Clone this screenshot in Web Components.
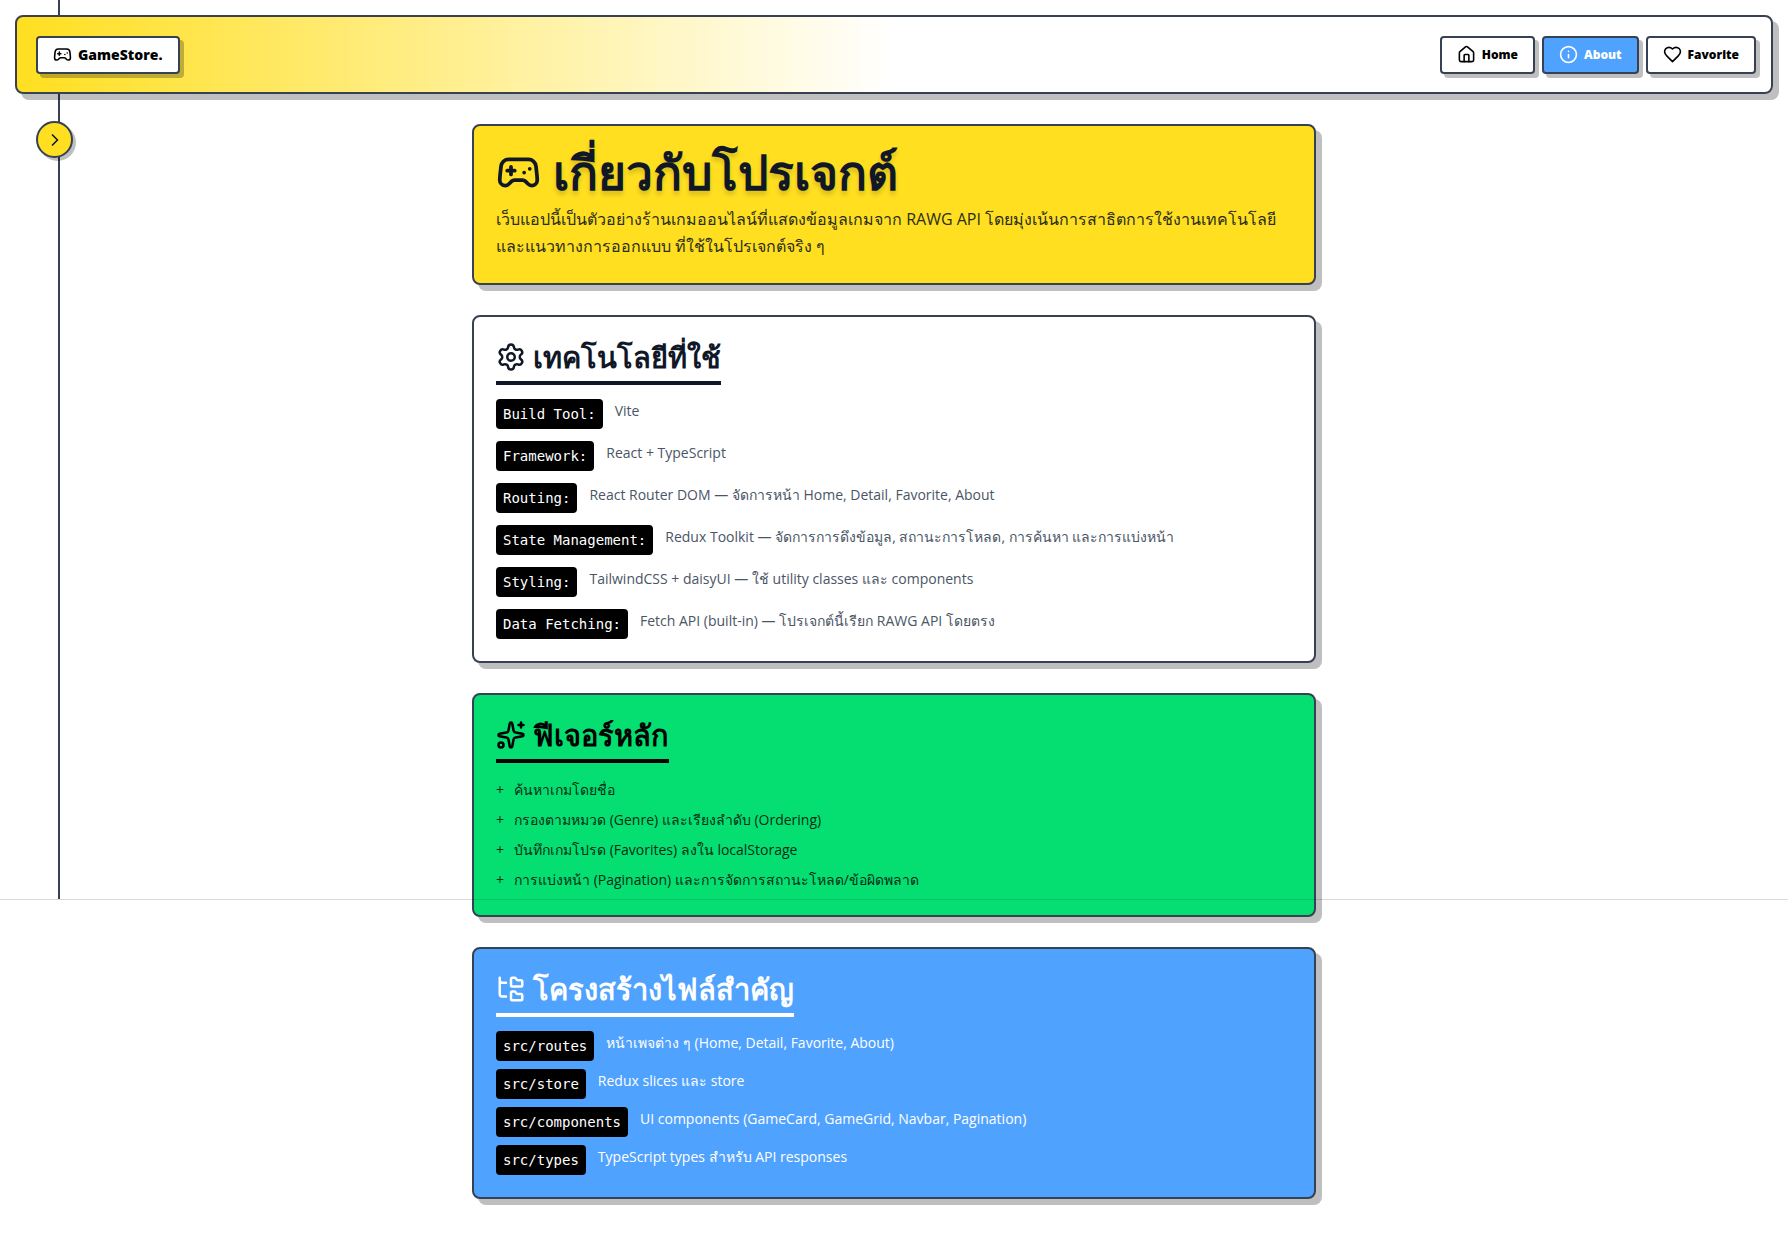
<!DOCTYPE html>
<html lang="th">
<head>
<meta charset="utf-8">
<meta name="viewport" content="width=device-width, initial-scale=1">
<title>GameStore.</title>
<style>
body { margin: 0; background: #fff; font-family: "Open Sans", "Noto Sans", sans-serif; font-size: 14px; }
</style>
</head>
<body>
<game-app></game-app>
<script>
const ICONS = {
  gamepad: '<path d="M6 11h4M8 9v4M15 12h.01M18 10h.01"/><path d="M17.32 5H6.68a4 4 0 0 0-3.978 3.59c-.006.052-.01.101-.017.152C2.604 9.416 2 14.456 2 16a3 3 0 0 0 3 3c1 0 1.5-.5 2-1l1.414-1.414A2 2 0 0 1 9.828 16h4.344a2 2 0 0 1 1.414.586L17 18c.5.5 1 1 2 1a3 3 0 0 0 3-3c0-1.545-.604-6.584-.685-7.258-.007-.05-.011-.1-.017-.151A4 4 0 0 0 17.32 5z"/>',
  home: '<path d="M15 21v-8a1 1 0 0 0-1-1h-4a1 1 0 0 0-1 1v8"/><path d="M3 10a2 2 0 0 1 .709-1.528l7-5.999a2 2 0 0 1 2.582 0l7 5.999A2 2 0 0 1 21 10v9a2 2 0 0 1-2 2H5a2 2 0 0 1-2-2z"/>',
  info: '<circle cx="12" cy="12" r="10"/><path d="M12 16v-4M12 8h.01"/>',
  heart: '<path d="M19 14c1.49-1.46 3-3.21 3-5.5A5.5 5.5 0 0 0 16.5 3c-1.76 0-3 .5-4.5 2-1.5-1.5-2.74-2-4.5-2A5.5 5.5 0 0 0 2 8.5c0 2.3 1.5 4.05 3 5.5l7 7Z"/>',
  chevron: '<path d="m9 18 6-6-6-6"/>',
  settings: '<path d="M9.671 4.136a2.34 2.34 0 0 1 4.659 0 2.34 2.34 0 0 0 3.319 1.915 2.34 2.34 0 0 1 2.33 4.033 2.34 2.34 0 0 0 0 3.831 2.34 2.34 0 0 1-2.33 4.033 2.34 2.34 0 0 0-3.319 1.915 2.34 2.34 0 0 1-4.659 0 2.34 2.34 0 0 0-3.32-1.915 2.34 2.34 0 0 1-2.33-4.033 2.34 2.34 0 0 0 0-3.831A2.34 2.34 0 0 1 6.35 6.051a2.34 2.34 0 0 0 3.319-1.915"/><circle cx="12" cy="12" r="3"/>',
  sparkles: '<path d="M11.017 2.814a1 1 0 0 1 1.966 0l1.051 5.558a2 2 0 0 0 1.594 1.594l5.558 1.051a1 1 0 0 1 0 1.966l-5.558 1.051a2 2 0 0 0-1.594 1.594l-1.051 5.558a1 1 0 0 1-1.966 0l-1.051-5.558a2 2 0 0 0-1.594-1.594l-5.558-1.051a1 1 0 0 1 0-1.966l5.558-1.051a2 2 0 0 0 1.594-1.594z"/><path d="M20 2v4M22 4h-4"/><circle cx="4" cy="20" r="2"/>',
  tree: '<path d="M20 10a1 1 0 0 0 1-1V6a1 1 0 0 0-1-1h-2.500a1 1 0 0 1-.8-.4l-.9-1.200A1 1 0 0 0 15 3h-2a1 1 0 0 0-1 1v5a1 1 0 0 0 1 1Z"/><path d="M20 21a1 1 0 0 0 1-1v-3a1 1 0 0 0-1-1h-2.900a1 1 0 0 1-.88-.55l-.42-.85a1 1 0 0 0-.92-.6H13a1 1 0 0 0-1 1v5a1 1 0 0 0 1 1Z"/><path d="M3 5a2 2 0 0 0 2 2h3M3 3v13a2 2 0 0 0 2 2h3"/>'
};

class Base extends HTMLElement {
  connectedCallback() {
    if (this.shadowRoot) return;
    this.attachShadow({ mode: 'open' }).innerHTML = this.render();
  }
}

customElements.define('g-icon', class extends Base {
  render() {
    return `<style>
      :host { display: block; flex: none; width: 1em; height: 1em; }
      svg { display: block; width: 100%; height: 100%; }
    </style>
    <svg viewBox="0 0 24 24" fill="none" stroke="currentColor" stroke-width="2" stroke-linecap="round" stroke-linejoin="round" aria-hidden="true">${ICONS[this.getAttribute('name')]}</svg>`;
  }
});

customElements.define('nav-button', class extends Base {
  render() {
    return `<style>
      :host { display: block; }
      a { box-sizing: border-box; height: 38px; padding: 0 15px; display: flex; align-items: center; gap: 6px;
        border: 2px solid #364153; border-radius: 4px; background: #fff; color: #000; text-decoration: none;
        box-shadow: 4px 4px 0 rgba(0,0,0,.25); font-size: 12px; font-weight: 800; line-height: 20px; }
      g-icon { font-size: 19px; }
      :host([brand]) a { padding: 0 16px 0 15px; font-size: 14px; }
      :host([active]) a { background: #50a2ff; color: #fff; }
    </style>
    <a href="#${this.getAttribute('icon')}"><g-icon name="${this.getAttribute('icon')}"></g-icon><slot></slot></a>`;
  }
});

customElements.define('site-header', class extends Base {
  render() {
    return `<style>
      :host { display: block; position: relative; z-index: 2; }
      header { box-sizing: border-box; height: 79px; padding: 0 15px 0 19px; display: flex; align-items: center; justify-content: space-between;
        border: 2px solid #364153; border-radius: 8px; background: linear-gradient(to right, #ffdf20, #fff 50%);
        box-shadow: 6px 6px 0 rgba(0,0,0,.25); }
      nav { display: flex; gap: 7px; }
    </style>
    <header>
      <nav-button brand icon="gamepad">GameStore.</nav-button>
      <nav>
        <nav-button icon="home">Home</nav-button>
        <nav-button icon="info" active>About</nav-button>
        <nav-button icon="heart">Favorite</nav-button>
      </nav>
    </header>`;
  }
});

customElements.define('side-drawer', class extends Base {
  render() {
    return `<style>
      :host { display: block; position: absolute; inset: 0 0 auto 0; height: 899px; z-index: 1; pointer-events: none; border-bottom: 1px solid rgba(16,24,40,.16); }
      .rail { box-sizing: border-box; width: 60px; height: 100%; border-right: 2px solid #364153; }
      button { position: absolute; left: 36px; top: 121px; box-sizing: border-box; width: 37px; height: 37px; padding: 0;
        display: grid; place-items: center; border: 2px solid #364153; border-radius: 50%; background: #ffdf20; color: #101828;
        box-shadow: 3px 3px 0 rgba(0,0,0,.25); pointer-events: auto; }
      g-icon { font-size: 20px; }
    </style>
    <div class="rail"></div>
    <button type="button" aria-label="เปิดเมนู"><g-icon name="chevron"></g-icon></button>`;
  }
});

customElements.define('info-card', class extends Base {
  render() {
    return `<style>
      :host { display: block; box-sizing: border-box; padding: 22px; border: 2px solid #364153; border-radius: 8px;
        background: #fff; color: #4a5565; box-shadow: 6px 6px 0 rgba(0,0,0,.25); --head: #101828; }
      :host([tone="green"]) { background: #05df72; color: #032e15; --head: #000; }
      :host([tone="blue"]) { background: #50a2ff; color: #fff; --head: #fff; }
      h2 { box-sizing: border-box; width: fit-content; height: 46px; margin: 0 0 14px; padding-bottom: 6px; display: flex; align-items: center; gap: 7px;
        border-bottom: 4px solid var(--head); color: var(--head); font-size: 29px; font-weight: 700; line-height: 36px; white-space: nowrap; }
      g-icon { font-size: 30px; }
    </style>
    <h2><g-icon name="${this.getAttribute('icon')}"></g-icon><span>${this.getAttribute('heading')}</span></h2>
    <slot></slot>`;
  }
});

customElements.define('hero-card', class extends Base {
  render() {
    return `<style>
      :host { display: block; box-sizing: border-box; padding: 22px; border: 2px solid #364153; border-radius: 8px;
        background: #ffdf20; color: #2a2d1c; box-shadow: 6px 6px 0 rgba(0,0,0,.25); }
      h1 { margin: 0 0 10px; height: 48px; display: flex; align-items: center; gap: 12px; color: #101828; font-size: 48px; font-weight: 700; line-height: 48px;
        white-space: nowrap; text-shadow: 0 4px 4px rgba(0,0,0,.15); }
      g-icon { font-size: 45px; }
      p { margin: 0 0 1px; font-size: 16px; line-height: 27px; }
    </style>
    <h1><g-icon name="gamepad"></g-icon><span>เกี่ยวกับโปรเจกต์</span></h1>
    <p><slot></slot></p>`;
  }
});

customElements.define('spec-row', class extends Base {
  render() {
    return `<style>
      :host { display: flex; align-items: flex-start; gap: 12px; line-height: 24px; }
      code { flex: none; box-sizing: border-box; height: 30px; padding: 0 7px; border-radius: 4px; background: #000; color: #fff;
        font-family: "DejaVu Sans Mono", monospace; font-size: 14px; line-height: 30px; }
    </style>
    <code>${this.getAttribute('label')}</code><span><slot></slot></span>`;
  }
});

customElements.define('row-list', class extends Base {
  render() {
    return `<style>
      :host { display: flex; flex-direction: column; gap: 12px; }
      :host([tight]) { gap: 8px; }
    </style><slot></slot>`;
  }
});

customElements.define('plus-list', class extends Base {
  render() {
    return `<style>
      :host { display: block; }
      ul { margin: 0; padding: 0; list-style: none; display: flex; flex-direction: column; gap: 4px; line-height: 26px; }
      li { display: flex; gap: 10px; }
    </style>
    <ul>${[...this.children].map(c => `<li><span>+</span><span>${c.innerHTML}</span></li>`).join('')}</ul>`;
  }
});

customElements.define('game-app', class extends Base {
  render() {
    return `<style>
      :host { display: block; position: relative; }
      .page { padding: 15px 15px 32px; }
      main { max-width: 844px; margin: 30px auto 0; display: flex; flex-direction: column; gap: 30px; }
    </style>
    <side-drawer></side-drawer>
    <div class="page">
      <site-header></site-header>
      <main>
        <hero-card>เว็บแอปนี้เป็นตัวอย่างร้านเกมออนไลน์ที่แสดงข้อมูลเกมจาก RAWG API โดยมุ่งเน้นการสาธิตการใช้งานเทคโนโลยี และแนวทางการออกแบบ ที่ใช้ในโปรเจกต์จริง ๆ</hero-card>
        <info-card icon="settings" heading="เทคโนโลยีที่ใช้">
          <row-list>
            <spec-row label="Build Tool:">Vite</spec-row>
            <spec-row label="Framework:">React + TypeScript</spec-row>
            <spec-row label="Routing:">React Router DOM — จัดการหน้า Home, Detail, Favorite, About</spec-row>
            <spec-row label="State Management:">Redux Toolkit — จัดการการดึงข้อมูล, สถานะการโหลด, การค้นหา และการแบ่งหน้า</spec-row>
            <spec-row label="Styling:">TailwindCSS + daisyUI — ใช้ utility classes และ components</spec-row>
            <spec-row label="Data Fetching:">Fetch API (built-in) — โปรเจกต์นี้เรียก RAWG API โดยตรง</spec-row>
          </row-list>
        </info-card>
        <info-card icon="sparkles" tone="green" heading="ฟีเจอร์หลัก">
          <plus-list>
            <span>ค้นหาเกมโดยชื่อ</span>
            <span>กรองตามหมวด (Genre) และเรียงลำดับ (Ordering)</span>
            <span>บันทึกเกมโปรด (Favorites) ลงใน localStorage</span>
            <span>การแบ่งหน้า (Pagination) และการจัดการสถานะโหลด/ข้อผิดพลาด</span>
          </plus-list>
        </info-card>
        <info-card icon="tree" tone="blue" heading="โครงสร้างไฟล์สำคัญ">
          <row-list tight>
            <spec-row label="src/routes">หน้าเพจต่าง ๆ (Home, Detail, Favorite, About)</spec-row>
            <spec-row label="src/store">Redux slices และ store</spec-row>
            <spec-row label="src/components">UI components (GameCard, GameGrid, Navbar, Pagination)</spec-row>
            <spec-row label="src/types">TypeScript types สำหรับ API responses</spec-row>
          </row-list>
        </info-card>
      </main>
    </div>`;
  }
});
</script>
</body>
</html>
